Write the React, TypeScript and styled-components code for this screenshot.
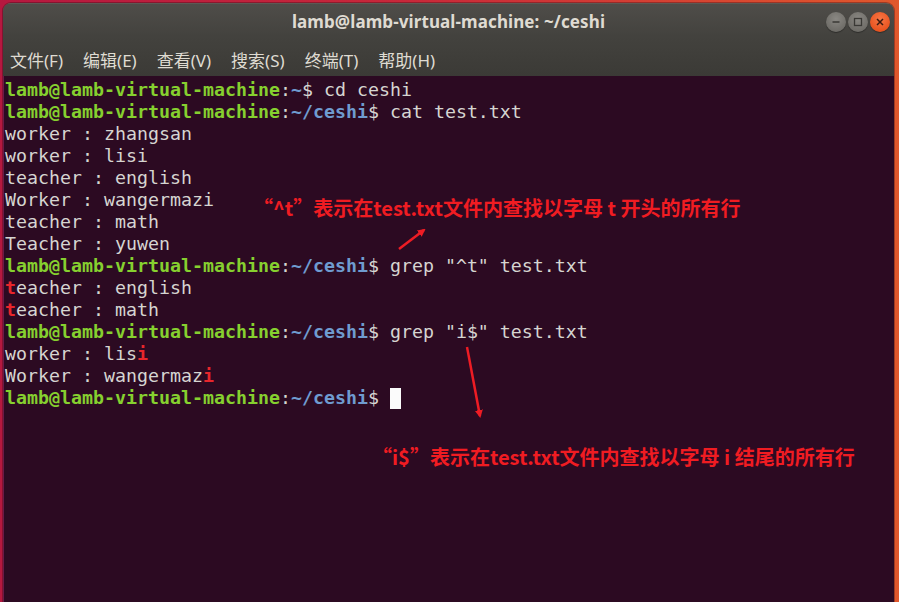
import React from "react";
import styled, { createGlobalStyle } from "styled-components";

const GlobalStyle = createGlobalStyle`
  html, body {
    margin: 0;
    height: 100%;
    overflow: hidden;
  }
  body {
    background: linear-gradient(90deg, #b5183f 0%, #c8283a 45%, #e0582c 100%);
  }
`;

type Seg = { t: string; k?: "user" | "path" | "hit" };

const prompt = (path: string, cmd: string): Seg[] => [
  { t: "lamb@lamb-virtual-machine", k: "user" },
  { t: ":" },
  { t: path, k: "path" },
  { t: "$ " + cmd },
];

const lines: Seg[][] = [
  prompt("~", "cd ceshi"),
  prompt("~/ceshi", "cat test.txt"),
  [{ t: "worker : zhangsan" }],
  [{ t: "worker : lisi" }],
  [{ t: "teacher : english" }],
  [{ t: "Worker : wangermazi" }],
  [{ t: "teacher : math" }],
  [{ t: "Teacher : yuwen" }],
  prompt("~/ceshi", 'grep "^t" test.txt'),
  [{ t: "t", k: "hit" }, { t: "eacher : english" }],
  [{ t: "t", k: "hit" }, { t: "eacher : math" }],
  prompt("~/ceshi", 'grep "i$" test.txt'),
  [{ t: "worker : lis" }, { t: "i", k: "hit" }],
  [{ t: "Worker : wangermaz" }, { t: "i", k: "hit" }],
];

const menus = ["文件(F)", "编辑(E)", "查看(V)", "搜索(S)", "终端(T)", "帮助(H)"];

function App() {
  return (
    <>
      <GlobalStyle />
      <Window>
        <Header>
          <TitleBar>
            <span />
            <Title>lamb@lamb-virtual-machine: ~/ceshi</Title>
            <Controls>
              <WinButton>
                <svg width="10" height="10" viewBox="0 0 10 10">
                  <line x1="1.5" y1="5" x2="8.5" y2="5" stroke="#3a3935" strokeWidth="1.4" />
                </svg>
              </WinButton>
              <WinButton>
                <svg width="10" height="10" viewBox="0 0 10 10">
                  <rect x="1.5" y="1.5" width="7" height="7" fill="none" stroke="#3a3935" strokeWidth="1.3" />
                </svg>
              </WinButton>
              <WinButton $close>
                <svg width="10" height="10" viewBox="0 0 10 10">
                  <path d="M2 2 L8 8 M8 2 L2 8" stroke="#3b1a10" strokeWidth="1.5" />
                </svg>
              </WinButton>
            </Controls>
          </TitleBar>
          <MenuBar>
            {menus.map((m) => (
              <MenuItem key={m}>{m}</MenuItem>
            ))}
          </MenuBar>
        </Header>
        <Terminal>
          {lines.map((segs, i) => (
            <Line key={i}>
              {segs.map((s, j) => (
                <Seg key={j} $kind={s.k}>
                  {s.t}
                </Seg>
              ))}
            </Line>
          ))}
          <Line>
            <Seg $kind="user">lamb@lamb-virtual-machine</Seg>
            <Seg>:</Seg>
            <Seg $kind="path">~/ceshi</Seg>
            <Seg>$ </Seg>
            <Cursor />
          </Line>

          <Arrows width="893" height="526" viewBox="0 0 893 526">
            <defs>
              <marker id="head" markerWidth="8" markerHeight="8" refX="6" refY="4" orient="auto" markerUnits="userSpaceOnUse">
                <path d="M0 0 L8 4 L0 8 Z" fill="#ee1c24" />
              </marker>
            </defs>
            <line x1="395" y1="173" x2="420" y2="154" stroke="#ee1c24" strokeWidth="2.5" markerEnd="url(#head)" />
            <line x1="463" y1="271" x2="476" y2="340" stroke="#ee1c24" strokeWidth="2.5" markerEnd="url(#head)" />
          </Arrows>
          <Note $left={249} $top={120}>“^t”表示在test.txt文件内查找以字母 t 开头的所有行</Note>
          <Note $left={368} $top={369}>“i$”表示在test.txt文件内查找以字母 i 结尾的所有行</Note>
        </Terminal>
      </Window>
    </>
  );
}

const Window = styled.div`
  margin: 3px 5px 0 3px;
  height: 599px;
  display: flex;
  flex-direction: column;
  border-radius: 8px 8px 0 0;
  overflow: hidden;
  box-shadow: 0 0 0 1px rgba(40, 10, 20, 0.35);
`;

const Header = styled.div`
  background: linear-gradient(180deg, #4f4d49 0%, #43423e 45%, #3b3a36 100%);
  border-top: 1px solid #5c5a55;
`;

const TitleBar = styled.div`
  height: 35px;
  display: grid;
  grid-template-columns: 1fr auto 1fr;
  align-items: center;
`;

const Title = styled.div`
  font-family: "Noto Sans", "DejaVu Sans", sans-serif;
  font-weight: 700;
  font-size: 17px;
  color: #dfdbd2;
  letter-spacing: 0.1px;
`;

const Controls = styled.div`
  justify-self: end;
  display: flex;
  gap: 2px;
  padding-right: 4px;
  padding-top: 1px;
`;

const WinButton = styled.div<{ $close?: boolean }>`
  width: 20px;
  height: 20px;
  border-radius: 50%;
  display: flex;
  align-items: center;
  justify-content: center;
  background: ${(p) =>
    p.$close
      ? "radial-gradient(circle at 50% 35%, #f57645 0%, #e95420 70%, #c9441a 100%)"
      : "radial-gradient(circle at 50% 35%, #8a8883 0%, #6f6d68 70%, #5a5955 100%)"};
  box-shadow: 0 1px 1px rgba(0, 0, 0, 0.35);
`;

const MenuBar = styled.div`
  height: 37px;
  display: flex;
  align-items: center;
  gap: 20px;
  padding: 3px 0 0 7px;
  box-sizing: border-box;
`;

const MenuItem = styled.span`
  font-family: "Noto Sans", "Noto Sans CJK SC", sans-serif;
  font-size: 17px;
  color: #dfdbd2;
`;

const Terminal = styled.div`
  position: relative;
  flex: 1;
  background: #2c0a22;
  border-left: 1px solid #6a1a48;
  padding: 3px 0 0 1px;
  font-family: "DejaVu Sans Mono", "Liberation Mono", monospace;
  font-size: 18.27px;
  line-height: 22px;
  color: #d6d5d1;
`;

const Line = styled.div`
  white-space: pre;
  height: 22px;
  display: flex;
  align-items: center;
`;

const kindColor = {
  user: "#86d02f",
  path: "#6f9bd0",
  hit: "#e8262c",
};

const Seg = styled.span<{ $kind?: "user" | "path" | "hit" }>`
  white-space: pre;
  color: ${(p) => (p.$kind ? kindColor[p.$kind] : "inherit")};
  font-weight: ${(p) => (p.$kind ? 700 : 400)};
`;

const Cursor = styled.span`
  display: inline-block;
  width: 11px;
  height: 21px;
  background: #fbfbfb;
`;

const Arrows = styled.svg`
  position: absolute;
  left: 0;
  top: 0;
  pointer-events: none;
`;

const Note = styled.div<{ $left: number; $top: number }>`
  position: absolute;
  left: ${(p) => p.$left}px;
  top: ${(p) => p.$top}px;
  font-family: "Noto Sans CJK SC", "Noto Sans", sans-serif;
  font-weight: 700;
  font-size: 20px;
  line-height: 24px;
  color: #f01c22;
  white-space: nowrap;
`;

export default App;
